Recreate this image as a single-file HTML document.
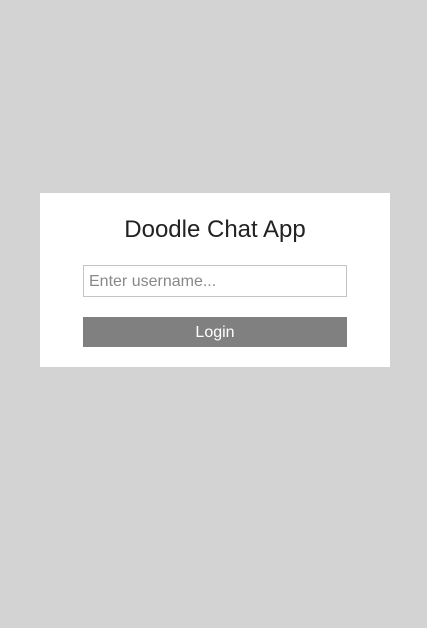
<!DOCTYPE html>
<html><head><style>
html,body{margin:0;padding:0;}
body{width:427px;height:628px;background:#d3d3d3;position:relative;font-family:"Liberation Sans",sans-serif;}
.card{position:absolute;left:40px;top:193px;width:350px;height:174px;background:#fff;}
h1{position:absolute;left:0;right:0;top:21px;margin:0;text-align:center;font-weight:normal;font-size:24px;color:#222;line-height:32px;}
.inp{position:absolute;left:43px;top:72px;width:262px;height:30px;border:1px solid #c4c4c4;box-sizing:content-box;}
.inp span{position:absolute;left:5px;top:7px;font-size:16px;color:#888;}
.btn{position:absolute;left:43px;top:124px;width:264px;height:30px;background:#808080;color:#fff;font-size:16px;text-align:center;line-height:31px;}
</style></head><body>
<div class="card">
<h1>Doodle Chat App</h1>
<div class="inp"><span>Enter username...</span></div>
<div class="btn">Login</div>
</div>
</body></html>
